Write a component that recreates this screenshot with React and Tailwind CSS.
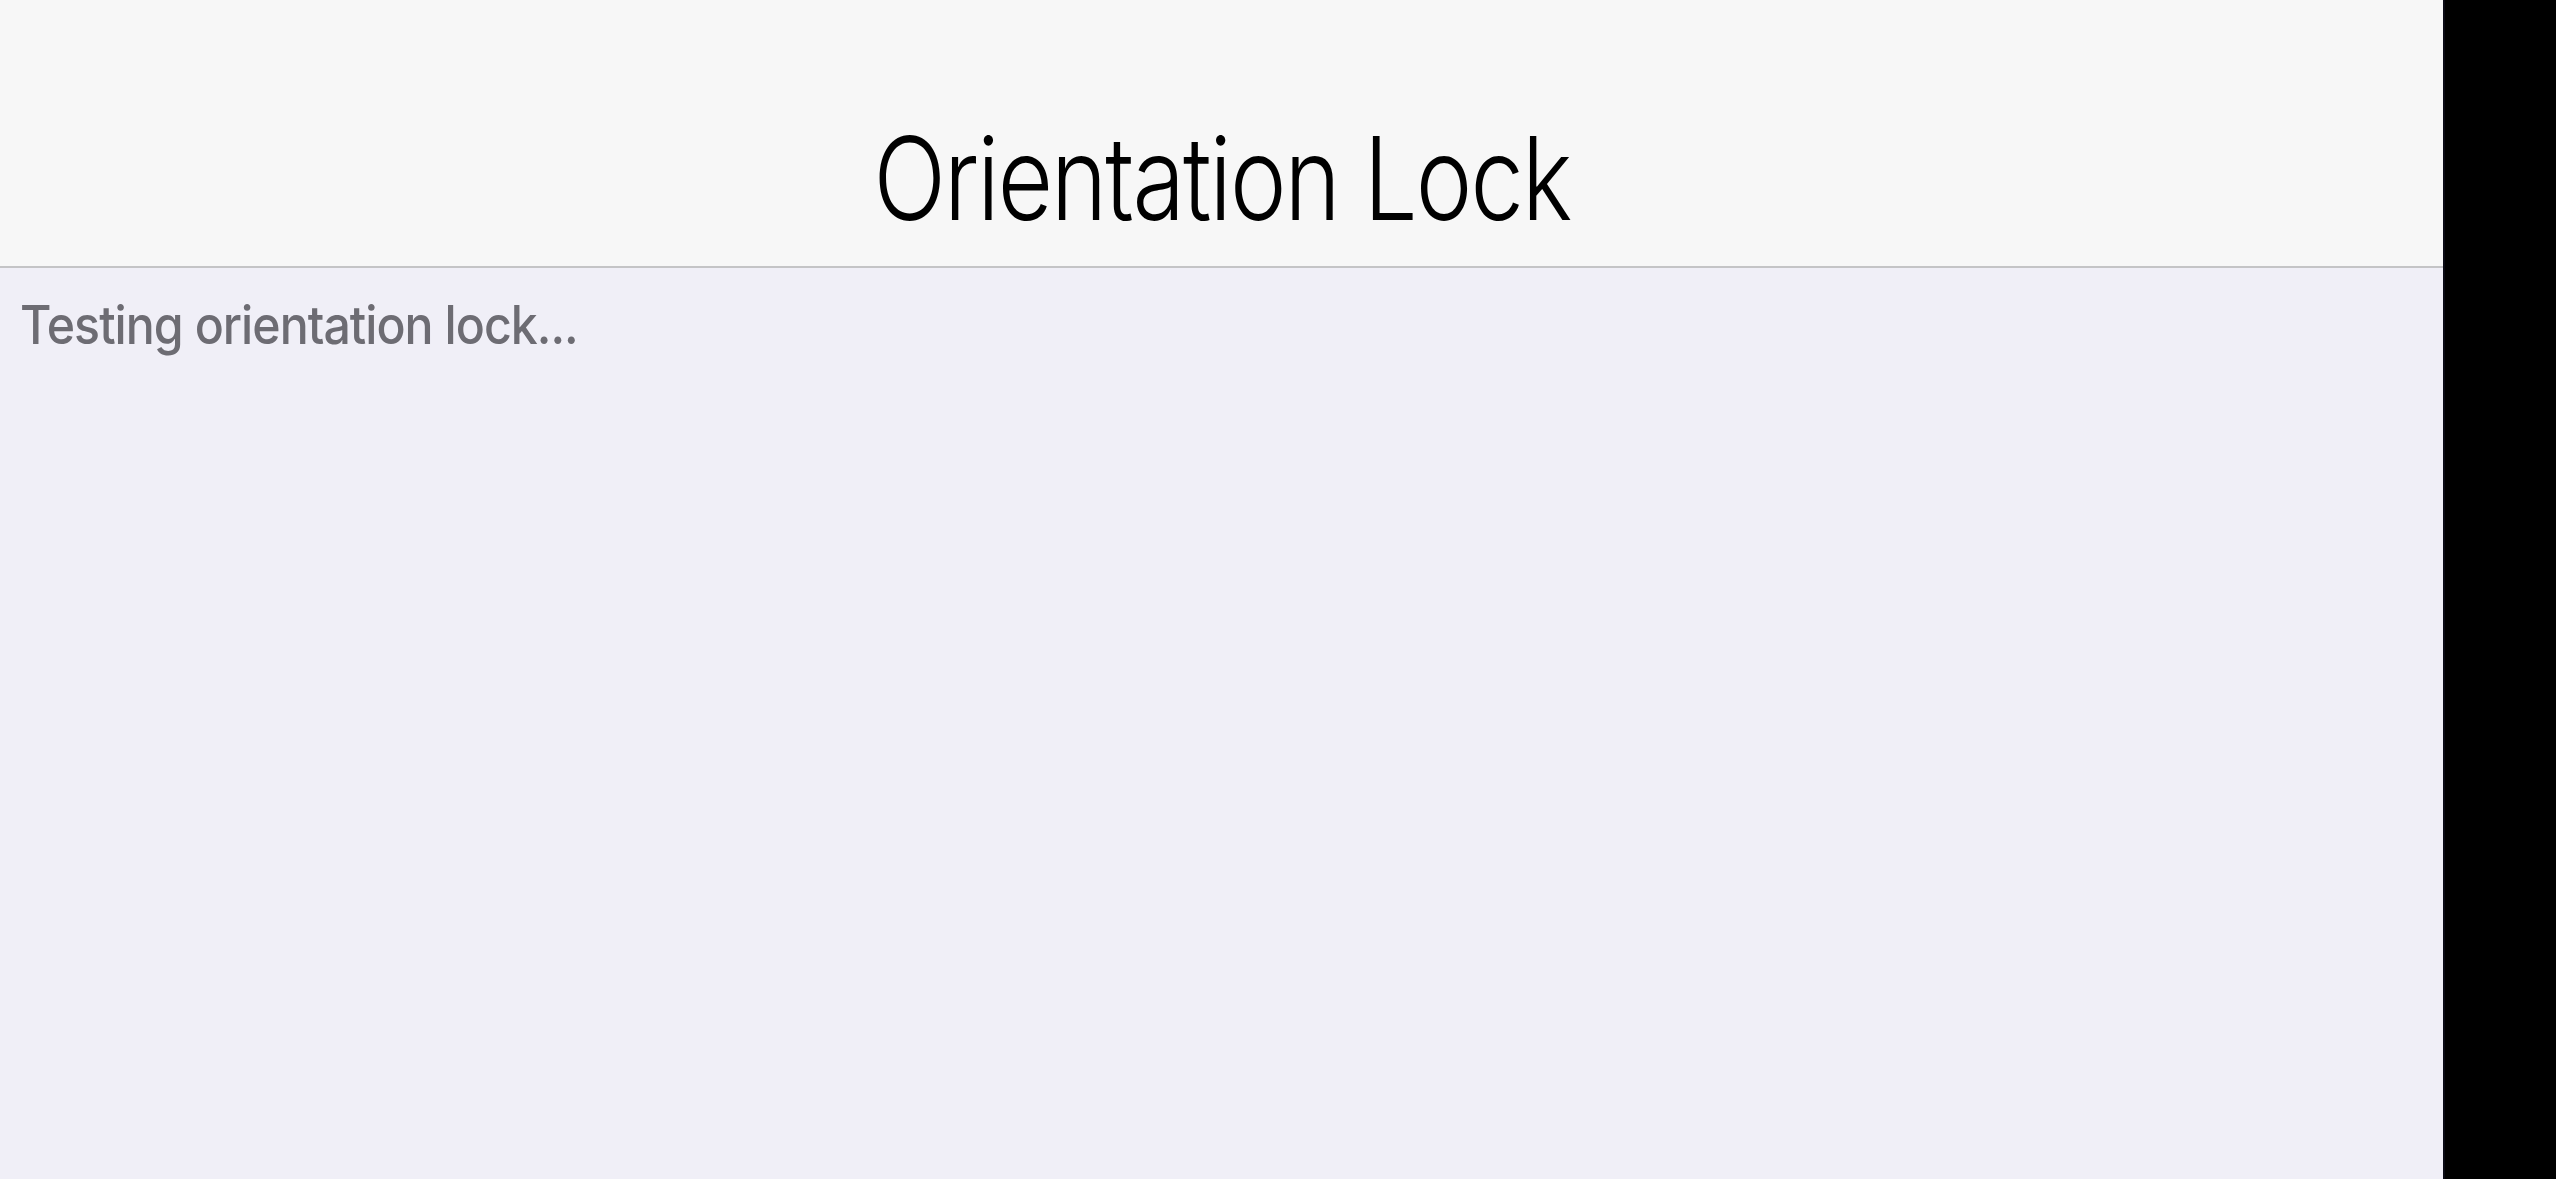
export default function App() {
  return (
    <div className="flex h-[1179px] w-[2556px] overflow-hidden bg-black" style={{ fontFamily: 'Inter, "Noto Sans", sans-serif' }}>
      <div className="flex w-[2445px] flex-col border-r-2 border-[#0a0a14] bg-[#f0eff7]">
        <header className="flex h-[268px] items-end justify-center border-b-2 border-[#c4c4c6] bg-[#f7f7f7] pb-[30px]">
          <h1 className="origin-center scale-x-[0.83] text-[115px] font-light leading-none tracking-[-0.02em] text-black">Orientation Lock</h1>
        </header>
        <main className="px-[20px] pt-[31px]">
          <p className="origin-left scale-x-[0.91] text-[53px] font-medium leading-none tracking-[-0.02em] text-[#6d6c73]">Testing orientation lock...</p>
        </main>
      </div>
      <div className="flex-1 bg-black" />
    </div>
  );
}
